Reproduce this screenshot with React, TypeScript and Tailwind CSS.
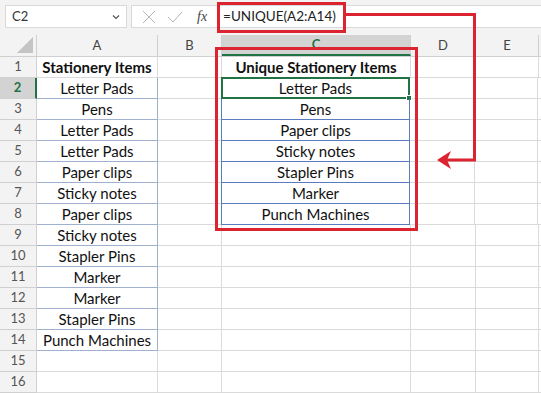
import React from 'react';

const colA = ['Stationery Items', 'Letter Pads', 'Pens', 'Letter Pads', 'Letter Pads', 'Paper clips', 'Sticky notes', 'Paper clips', 'Sticky notes', 'Stapler Pins', 'Marker', 'Marker', 'Stapler Pins', 'Punch Machines', '', ''];
const colC = ['Unique Stationery Items', 'Letter Pads', 'Pens', 'Paper clips', 'Sticky notes', 'Stapler Pins', 'Marker', 'Punch Machines'];

const font = { fontFamily: 'Lato, "Open Sans", sans-serif' };

const FormulaBar: React.FC = () => (
    <div className="flex h-[35px] items-start bg-[#f3f3f3] pt-[5px]">
        <div className="ml-[5px] flex h-[23px] w-[122px] items-center justify-between border border-[#d9d9d9] bg-white pl-[6px] pr-[4px] text-[13px] text-[#333]">
            <span>C2</span>
            <svg width="8" height="6" viewBox="0 0 8 6" className="mr-[2px]"><path d="M1 1.5 L4 4.5 L7 1.5" fill="none" stroke="#555" strokeWidth="1.2" /></svg>
        </div>
        <div className="ml-[4px] flex h-[23px] flex-1 items-center border-y border-l border-[#d9d9d9] bg-white">
            <svg width="14" height="14" viewBox="0 0 14 14" className="ml-[10px]"><path d="M1 1 L13 13 M13 1 L1 13" stroke="#b5b5b5" strokeWidth="1" /></svg>
            <svg width="16" height="14" viewBox="0 0 16 14" className="ml-[11px]"><path d="M1 7 L6 12 L15 2" fill="none" stroke="#b5b5b5" strokeWidth="1" /></svg>
            <span className="ml-[14px] text-[14px] italic text-[#444]" style={{ fontFamily: '"Liberation Serif", serif' }}>fx</span>
            <span className="ml-[16px] text-[13.5px] text-[#222]">=UNIQUE(A2:A14)</span>
        </div>
    </div>
);

const ColumnHeaders: React.FC = () => (
    <div className="flex h-[22px] border-b border-[#d0d0d0] bg-[#f3f3f3] text-[13px] text-[#444]">
        <div className="relative w-[37px] border-r border-[#d0d0d0]">
            <svg width="16" height="16" viewBox="0 0 16 16" className="absolute right-[3px] bottom-[3px]"><path d="M16 0 L16 16 L0 16 Z" fill="#c4c4c4" /></svg>
        </div>
        <div className="flex w-[121px] items-center justify-center border-r border-[#d0d0d0]">A</div>
        <div className="flex w-[64px] items-center justify-center border-r border-[#d0d0d0]">B</div>
        <div className="flex w-[189px] items-center justify-center border-r border-b-2 border-r-[#d0d0d0] border-b-[#217346] bg-[#d3d3d3] font-bold text-[#217346]">C</div>
        <div className="flex w-[65px] items-center justify-center border-r border-[#d0d0d0]">D</div>
        <div className="flex w-[63px] items-center justify-center border-r border-[#d0d0d0]">E</div>
        <div className="flex-1" />
    </div>
);

const Row: React.FC<{ n: number }> = ({ n }) => {
    const a = colA[n - 1];
    const c = colC[n - 1];
    const bold = n === 1;
    const aTable = n >= 2 && n <= 14;
    const cTable = n >= 2 && n <= 8;
    return (
        <div className="flex h-[21px] text-[15px] text-[#111]">
            <div className={`flex w-[37px] items-center justify-center border-b text-[13px] ${n === 2 ? 'border-r-2 border-r-[#217346] border-b-[#d0d0d0] bg-[#d3d3d3] font-bold text-[#217346]' : 'border-r border-[#d0d0d0] bg-[#f3f3f3] text-[#555]'}`}>{n}</div>
            <div className={`flex w-[121px] items-center justify-center border-r border-b ${aTable ? 'border-[#9fb1cf]' : 'border-[#dadada]'} ${bold ? 'font-bold' : ''}`}>{a}</div>
            <div className="w-[64px] border-r border-b border-[#dadada]" />
            <div className={`relative flex w-[189px] items-center justify-center border-r border-b ${cTable ? 'border-[#5b7bbf] border-l border-l-[#5b7bbf] -ml-px' : 'border-[#dadada]'} ${bold ? 'font-bold' : ''}`}>
                {c}
                {n === 2 && (
                    <div className="absolute -top-px -left-px -right-px -bottom-px border-2 border-[#217346]">
                        <div className="absolute -right-[4px] -bottom-[4px] h-[6px] w-[6px] border border-white bg-[#217346]" />
                    </div>
                )}
            </div>
            <div className="w-[65px] border-r border-b border-[#dadada]" />
            <div className="w-[63px] border-r border-b border-[#dadada]" />
            <div className="flex-1 border-b border-[#dadada]" />
        </div>
    );
};

const App: React.FC = () => {
    return (
        <div className="relative h-[393px] w-[541px] overflow-hidden bg-white" style={font}>
            <FormulaBar />
            <ColumnHeaders />
            {Array.from({ length: 16 }, (_, i) => <Row key={i} n={i + 1} />)}
            <svg className="pointer-events-none absolute inset-0" width="541" height="393" viewBox="0 0 541 393">
                <rect x="218.5" y="3.5" width="126" height="28" fill="none" stroke="#dc2430" strokeWidth="3" />
                <rect x="216.5" y="48.5" width="200" height="181" fill="none" stroke="#dc2430" strokeWidth="3" />
                <path d="M346 14.5 L474.5 14.5 L474.5 160 L444 160" fill="none" stroke="#dc2430" strokeWidth="3" />
                <path d="M437 160 L451 151 L447 160 L451 169 Z" fill="#dc2430" />
            </svg>
        </div>
    );
};

export default App;
